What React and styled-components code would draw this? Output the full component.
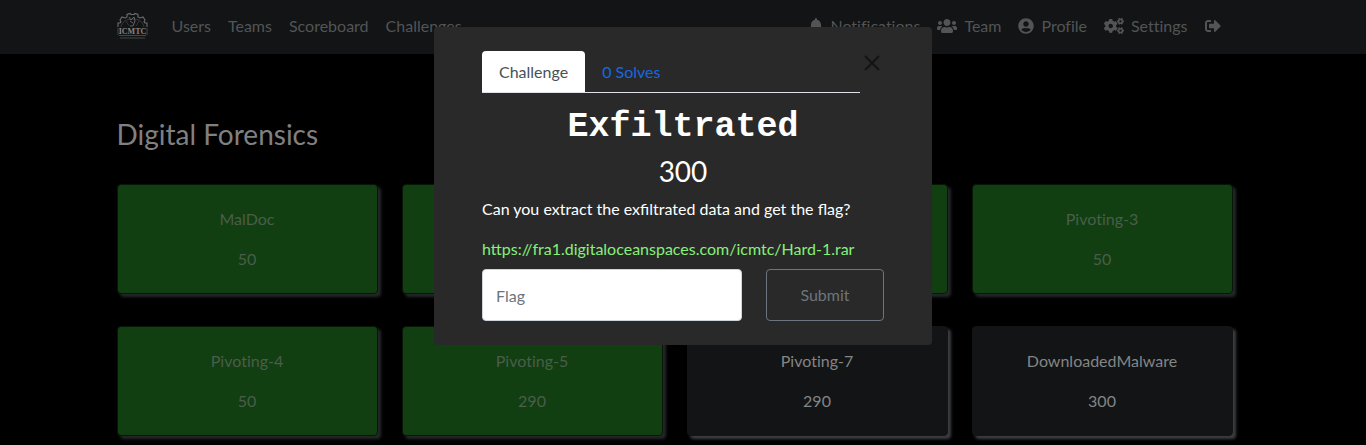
import React from "react";
import styled, { createGlobalStyle } from "styled-components";
import { FaBell, FaUsers, FaUserCircle, FaCogs, FaSignOutAlt } from "react-icons/fa";

const GlobalStyle = createGlobalStyle`
  *, *::before, *::after { box-sizing: border-box; }
  body {
    margin: 0;
    background: #000;
    color: #808080;
    font-family: Lato, "Liberation Sans", sans-serif;
    font-size: 16px;
    line-height: 24px;
  }
  h1, h2, h3, p, ul { margin: 0; padding: 0; }
  button, input { font: inherit; }
`;

const Page = styled.div`
  min-height: 100vh;
`;

const Bar = styled.header`
  background: #121416;
  padding: 0 17px 0 0;
`;

const Container = styled.div`
  width: 100%;
  max-width: 1140px;
  margin: 0 auto;
  padding: 0 12px;
`;

const BarInner = styled(Container)`
  display: flex;
  align-items: center;
  padding-top: 14px;
  padding-bottom: 16px;
`;

const Brand = styled.a`
  display: flex;
  height: 24px;
  align-items: center;
  margin-right: 16px;
  svg { display: block; }
`;

const NavList = styled.ul`
  display: flex;
  gap: 1px;
  list-style: none;
  margin-left: ${(p) => (p.$end ? "auto" : "0")};
  margin-right: ${(p) => (p.$end ? "4px" : "0")};
`;

const NavLink = styled.a`
  display: flex;
  align-items: center;
  gap: 7px;
  height: 24px;
  padding: 0 8px;
  color: #535455;
  text-decoration: none;
  font-variant-ligatures: none;
  svg { flex: none; height: 16px; width: ${(p) => p.$iconWidth || 16}px; }
`;

const Main = styled.main`
  padding: 63px 17px 8px 0;
`;

const Category = styled.h3`
  font-size: 28px;
  line-height: 34px;
  font-weight: 400;
  color: #808080;
  margin-bottom: 33px;
`;

const Grid = styled.div`
  display: grid;
  grid-template-columns: repeat(4, minmax(0, 1fr));
  gap: 32px 24px;
`;

const Card = styled.button`
  display: flex;
  flex-direction: column;
  align-items: center;
  gap: 16px;
  padding: 22px 12px;
  border: 1px solid ${(p) => (p.$solved ? "#061706" : "#121416")};
  border-radius: 4px;
  background: ${(p) => (p.$solved ? "#113f11" : "#121416")};
  color: ${(p) => (p.$solved ? "#4b5d4b" : "#848585")};
  box-shadow: 3px 3px 3px ${(p) => (p.$solved ? "#26272b" : "#3c3e42")};
  font-variant-ligatures: none;
  cursor: pointer;
`;

const Modal = styled.div`
  position: fixed;
  top: 27px;
  left: 0;
  right: 0;
  width: 498px;
  max-width: 100%;
  margin: 0 auto;
  padding: 24px 48px;
  border-radius: 4px;
  background: #292929;
  color: #fff;
`;

const ModalHead = styled.div`
  display: flex;
  align-items: flex-start;
`;

const Tabs = styled.div`
  flex: 1;
  display: flex;
  border-bottom: 1px solid #dee2e6;
`;

const Tab = styled.button`
  height: 41px;
  padding: 0 17px;
  border: 0;
  border-radius: 4px 4px 0 0;
  background: ${(p) => (p.$active ? "#fff" : "transparent")};
  color: ${(p) => (p.$active ? "#495057" : "#1668e3")};
`;

const Close = styled.button`
  display: flex;
  width: 24px;
  height: 24px;
  padding: 4px;
  border: 0;
  background: transparent;
  color: #141414;
`;

const Title = styled.h2`
  margin-top: 14px;
  font-family: "Courier New", "Liberation Mono", monospace;
  font-size: 35px;
  line-height: 40px;
  font-weight: 700;
  text-align: center;
`;

const Points = styled.h3`
  margin: 6px 0 8px;
  font-size: 28px;
  line-height: 36px;
  font-weight: 400;
  text-align: center;
`;

const Description = styled.p`
  margin-bottom: ${(p) => (p.$last ? "8px" : "16px")};
  white-space: nowrap;
`;

const FileLink = styled.a`
  color: #86f07a;
  text-decoration: none;
`;

const Form = styled.form`
  display: grid;
  grid-template-columns: minmax(0, 1fr) 118px;
  gap: 24px;
`;

const FlagInput = styled.input`
  height: 52px;
  min-width: 0;
  padding: 0 13px;
  border: 1px solid #ced4da;
  border-radius: 4px;
  background: #fff;
  color: #495057;
  &::placeholder { color: #6c757d; opacity: 1; }
`;

const Submit = styled.button`
  height: 52px;
  border: 1px solid #6c757d;
  border-radius: 4px;
  background: transparent;
  color: #6c757d;
`;

const Logo = () => (
  <svg width="31" height="28" viewBox="0 0 31 28" fill="none" stroke="#6b6d6e" role="img" aria-label="ICMTC">
    <path d="M1 15v-4h2l1-1-1-2 2-3 3 1 2-1V2.500l3-1 1 1h3l1-1 3 1V5l2 1 3-1 2 3-1 2 1 1h2v4" strokeWidth="1.100" />
    <path d="M4 15c1-5 5-8 11.500-8S26 10 27 15" strokeWidth="0.700" opacity=".6" />
    <path d="M12 5l2 3 3-3 1 4-2 5h-3M13 9l3 2" strokeWidth="0.900" />
    <path d="M9 9l3 5M22 9l-3 5" strokeWidth="0.600" opacity=".6" />
    <text x="15.500" y="22" textAnchor="middle" fontFamily="Liberation Serif, serif" fontSize="8" fontWeight="700" fill="#858687" stroke="none">ICMTC</text>
    <path d="M1 16v7M30 16v7M2 23.500h27M3 26h25" strokeWidth="0.800" opacity=".7" />
  </svg>
);

const pages = ["Users", "Teams", "Scoreboard", "Challenges"];
const account = [
  { label: "Notifications", Icon: FaBell, iconWidth: 14 },
  { label: "Team", Icon: FaUsers, iconWidth: 20 },
  { label: "Profile", Icon: FaUserCircle, iconWidth: 16 },
  { label: "Settings", Icon: FaCogs, iconWidth: 20 },
];
const challenges = [
  { name: "MalDoc", value: 50, solved: true },
  { name: "", value: "", solved: true },
  { name: "", value: "", solved: true },
  { name: "Pivoting-3", value: 50, solved: true },
  { name: "Pivoting-4", value: 50, solved: true },
  { name: "Pivoting-5", value: 290, solved: true },
  { name: "Pivoting-7", value: 290, solved: false },
  { name: "DownloadedMalware", value: 300, solved: false },
];

export default function App() {
  return (
    <Page>
      <GlobalStyle />
      <Bar>
        <BarInner as="nav">
          <Brand href="#"><Logo /></Brand>
          <NavList>
            {pages.map((label) => (
              <li key={label}><NavLink href="#">{label}</NavLink></li>
            ))}
          </NavList>
          <NavList $end>
            {account.map(({ label, Icon, iconWidth }) => (
              <li key={label}><NavLink href="#" $iconWidth={iconWidth}><Icon />{label}</NavLink></li>
            ))}
            <li><NavLink href="#" aria-label="Logout"><FaSignOutAlt /></NavLink></li>
          </NavList>
        </BarInner>
      </Bar>

      <Main>
        <Container>
          <Category>Digital Forensics</Category>
          <Grid>
            {challenges.map((c, i) => (
              <Card key={i} type="button" $solved={c.solved}>
                <span>{c.name}</span>
                <span>{c.value}</span>
              </Card>
            ))}
          </Grid>
        </Container>
      </Main>

      <Modal role="dialog" aria-labelledby="challenge-title">
        <ModalHead>
          <Tabs role="tablist">
            <Tab type="button" role="tab" aria-selected="true" $active>Challenge</Tab>
            <Tab type="button" role="tab" aria-selected="false">0 Solves</Tab>
          </Tabs>
          <Close type="button" aria-label="Close">
            <svg width="16" height="16" viewBox="0 0 16 16" stroke="currentColor" strokeWidth="2">
              <path d="M1 1l14 14M15 1L1 15" />
            </svg>
          </Close>
        </ModalHead>
        <Title id="challenge-title">Exfiltrated</Title>
        <Points>300</Points>
        <Description>Can you extract the exfiltrated data and get the flag?</Description>
        <Description $last>
          <FileLink href="#">https://fra1.digitaloceanspaces.com/icmtc/Hard-1.rar</FileLink>
        </Description>
        <Form onSubmit={(e) => e.preventDefault()}>
          <FlagInput type="text" placeholder="Flag" aria-label="Flag" />
          <Submit type="submit">Submit</Submit>
        </Form>
      </Modal>
    </Page>
  );
}
